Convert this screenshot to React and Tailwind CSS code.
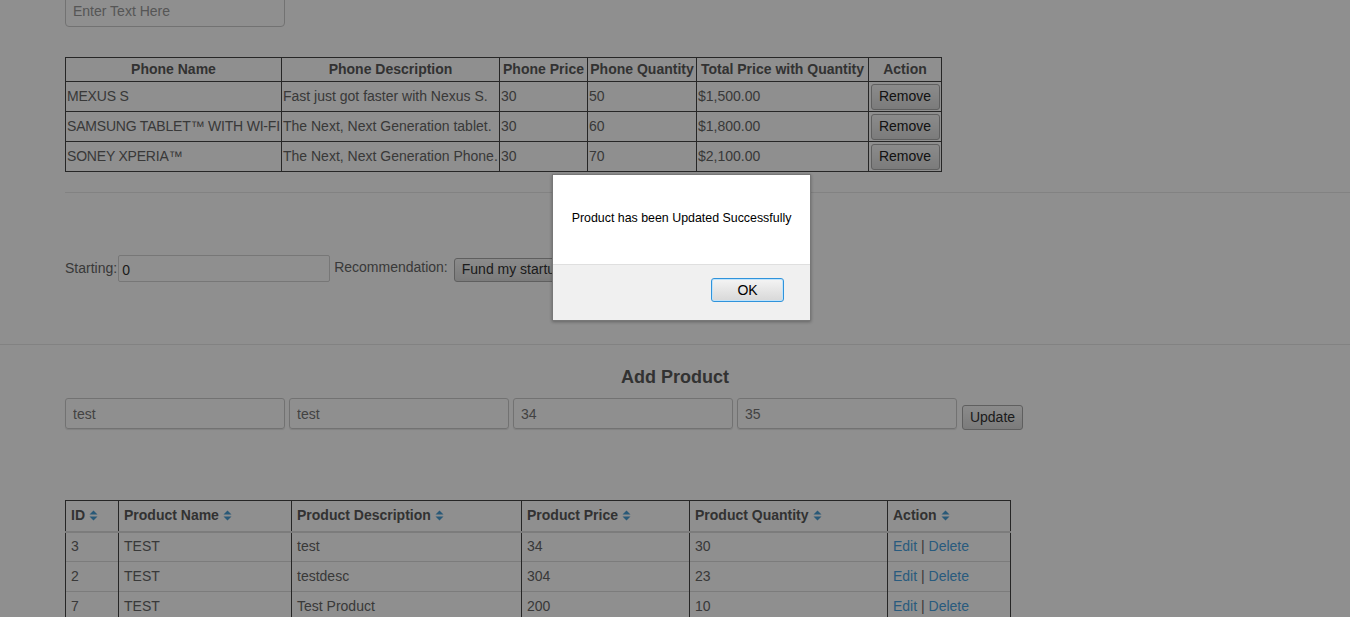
import React from "react";

const phones = [
  { name: "MEXUS S", desc: "Fast just got faster with Nexus S.", price: "30", qty: "50", total: "$1,500.00" },
  { name: "SAMSUNG TABLET™ WITH WI-FI", desc: "The Next, Next Generation tablet.", price: "30", qty: "60", total: "$1,800.00" },
  { name: "SONEY XPERIA™", desc: "The Next, Next Generation Phone.", price: "30", qty: "70", total: "$2,100.00" },
];

const products = [
  { id: "3", name: "TEST", desc: "test", price: "34", qty: "30" },
  { id: "2", name: "TEST", desc: "testdesc", price: "304", qty: "23" },
  { id: "7", name: "TEST", desc: "Test Product", price: "200", qty: "10" },
];

const SortIcon = () => (
  <svg width="9" height="11" viewBox="0 0 9 11" className="ml-[4px] inline-block align-[-1px]">
    <path d="M0.5 4.5 L4.5 0.5 L8.5 4.5 Z" fill="#4a9fd6" />
    <path d="M0.5 6.5 L4.5 10.5 L8.5 6.5 Z" fill="#4a9fd6" />
  </svg>
);

const GrayButton = ({ children, className = "" }) => (
  <button
    className={
      "rounded-[3px] border border-[#a9a9a9] bg-gradient-to-b from-[#f8f8f8] to-[#dcdcdc] text-[14px] text-[#222] " +
      className
    }
  >
    {children}
  </button>
);

export default function App() {
  const th1 = "border border-[#444] px-[1px] text-center font-bold text-[#5a5a5a] h-[24px] whitespace-nowrap overflow-hidden";
  const td1 = "border border-[#444] px-[1px] h-[30px] whitespace-nowrap overflow-hidden text-[#666]";
  const th2 = "border-x border-[#444] border-b-2 border-b-[#ddd] px-[5px] text-left font-bold text-[#5a5a5a] h-[31px] whitespace-nowrap";
  const td2 = "border-x border-[#444] border-t border-t-[#ddd] px-[5px] h-[30px] text-[#666] whitespace-nowrap";

  return (
    <div className="relative h-[617px] w-[1350px] overflow-hidden bg-white font-['Liberation_Sans',Arial,sans-serif] text-[14px]">
      <div className="pl-[65px]">
        <input
          placeholder="Enter Text Here"
          className="-mt-[8px] block h-[35px] w-[220px] rounded-[4px] border border-[#ccc] px-[7px] pt-[3px] text-[14px] placeholder:text-[#999]"
        />
        <table className="mt-[30px] w-[876px] table-fixed border-collapse">
          <colgroup>
            <col className="w-[216px]" />
            <col className="w-[218px]" />
            <col className="w-[88px]" />
            <col className="w-[109px]" />
            <col className="w-[172px]" />
            <col className="w-[73px]" />
          </colgroup>
          <thead>
            <tr>
              <th className={th1}>Phone Name</th>
              <th className={th1}>Phone Description</th>
              <th className={th1}>Phone Price</th>
              <th className={th1}>Phone Quantity</th>
              <th className={th1}>Total Price with Quantity</th>
              <th className={th1}>Action</th>
            </tr>
          </thead>
          <tbody>
            {phones.map((p) => (
              <tr key={p.name}>
                <td className={td1 + " tracking-[-0.2px]"}>{p.name}</td>
                <td className={td1}>{p.desc}</td>
                <td className={td1}>{p.price}</td>
                <td className={td1}>{p.qty}</td>
                <td className={td1}>{p.total}</td>
                <td className={td1 + " text-center"}>
                  <GrayButton className="h-[26px] w-[69px]">Remove</GrayButton>
                </td>
              </tr>
            ))}
          </tbody>
        </table>
      </div>

      <div className="ml-[65px] mt-[20px] border-t border-[#e8e8e8]" />

      <div className="mt-[62px] flex items-center pl-[65px] text-[#666]">
        <span>Starting:</span>
        <input
          defaultValue="0"
          className="ml-[1px] h-[27px] w-[212px] rounded-[2px] border border-[#d4d4d4] px-[3px] pt-[3px] text-[14px] text-[#333]"
        />
        <span className="ml-[4px] -mt-[3px]">Recommendation:</span>
        <GrayButton className="ml-[6px] mt-[2px] h-[24px] whitespace-nowrap px-[7px] text-[#333]">
          Fund my startup!
        </GrayButton>
      </div>

      <div className="mt-[62px] border-t border-[#e8e8e8]" />

      <h2 className="mt-[21px] text-center text-[18px] font-bold leading-[22px] text-[#5a5a5a]">
        Add Product
      </h2>
      <div className="mt-[10px] flex items-start gap-[4px] pl-[65px]">
        {["test", "test", "34", "35"].map((v, i) => (
          <input
            key={i}
            defaultValue={v}
            className="h-[31px] w-[220px] rounded-[3px] border border-[#ccc] px-[7px] text-[14px] text-[#777] shadow-[0_1px_1px_rgba(0,0,0,0.1)]"
          />
        ))}
        <GrayButton className="ml-[1px] mt-[7px] h-[25px] w-[61px] text-[#333]">Update</GrayButton>
      </div>

      <div className="mt-[70px] pl-[65px]">
        <table className="w-[945px] table-fixed border-collapse border-t border-[#444]">
          <colgroup>
            <col className="w-[53px]" />
            <col className="w-[173px]" />
            <col className="w-[230px]" />
            <col className="w-[168px]" />
            <col className="w-[198px]" />
            <col className="w-[123px]" />
          </colgroup>
          <thead>
            <tr>
              {["ID", "Product Name", "Product Description", "Product Price", "Product Quantity", "Action"].map((h) => (
                <th key={h} className={th2}>
                  {h}
                  <SortIcon />
                </th>
              ))}
            </tr>
          </thead>
          <tbody>
            {products.map((p) => (
              <tr key={p.id}>
                <td className={td2}>{p.id}</td>
                <td className={td2}>{p.name}</td>
                <td className={td2}>{p.desc}</td>
                <td className={td2}>{p.price}</td>
                <td className={td2}>{p.qty}</td>
                <td className={td2}>
                  <a className="text-[#4aa3e0]">Edit</a> | <a className="text-[#4aa3e0]">Delete</a>
                </td>
              </tr>
            ))}
          </tbody>
        </table>
      </div>

      {/* modal overlay */}
      <div className="absolute inset-0 bg-black/[0.44]" />

      <div className="absolute left-[552px] top-[174px] flex h-[147px] w-[259px] flex-col border border-[#777] bg-white shadow-[0_1px_3px_rgba(0,0,0,0.3)]">
        <div className="flex h-[89px] items-center justify-center pb-[3px] text-[12.4px] text-black">
          Product has been Updated Successfully
        </div>
        <div className="flex flex-1 justify-end border-t border-[#dfdfdf] bg-[#f0f0f0] pr-[26px] pt-[13px]">
          <button className="h-[24px] w-[73px] rounded-[3px] border border-[#2f93db] bg-gradient-to-b from-[#f4f4f4] to-[#d8d8d8] text-[14px] text-black shadow-[inset_0_0_0_1px_#bfe3fb]">
            OK
          </button>
        </div>
      </div>
    </div>
  );
}
